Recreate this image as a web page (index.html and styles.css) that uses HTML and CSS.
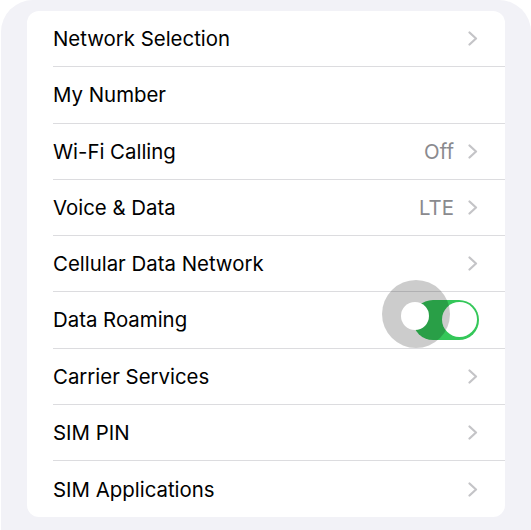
FILE: index.html
```html
<html>
<head>
<title>Cellular</title>
<link rel="stylesheet" href="styles.css">
</head>
<body>
<div class="panel">
  <div class="card">
    <div class="row"><span class="label">Network Selection</span><span class="detail"><svg class="chev" width="10" height="15" viewBox="0 0 10 15"><polyline points="1.5,1.5 8,7.5 1.5,13.5"/></svg></span></div>
    <div class="row"><span class="label">My Number</span></div>
    <div class="row"><span class="label">Wi-Fi Calling</span><span class="detail"><span class="value">Off</span><svg class="chev" width="10" height="15" viewBox="0 0 10 15"><polyline points="1.5,1.5 8,7.5 1.5,13.5"/></svg></span></div>
    <div class="row"><span class="label">Voice &amp; Data</span><span class="detail"><span class="value">LTE</span><svg class="chev" width="10" height="15" viewBox="0 0 10 15"><polyline points="1.5,1.5 8,7.5 1.5,13.5"/></svg></span></div>
    <div class="row"><span class="label">Cellular Data Network</span><span class="detail"><svg class="chev" width="10" height="15" viewBox="0 0 10 15"><polyline points="1.5,1.5 8,7.5 1.5,13.5"/></svg></span></div>
    <div class="row"><span class="label">Data Roaming</span><span class="switch"><span class="knob"></span><span class="touch"><span class="dot"></span></span></span></div>
    <div class="row"><span class="label">Carrier Services</span><span class="detail"><svg class="chev" width="10" height="15" viewBox="0 0 10 15"><polyline points="1.5,1.5 8,7.5 1.5,13.5"/></svg></span></div>
    <div class="row"><span class="label">SIM PIN</span><span class="detail"><svg class="chev" width="10" height="15" viewBox="0 0 10 15"><polyline points="1.5,1.5 8,7.5 1.5,13.5"/></svg></span></div>
    <div class="row"><span class="label">SIM Applications</span><span class="detail"><svg class="chev" width="10" height="15" viewBox="0 0 10 15"><polyline points="1.5,1.5 8,7.5 1.5,13.5"/></svg></span></div>
  </div>
</div>
</body>
</html>
```
FILE: styles.css
```css
body { margin:0; background:#fff; font-family:Inter, "Liberation Sans", sans-serif; color:#000; }
.panel { margin-left:1px; height:530px; box-sizing:border-box; background:#f2f2f7; border-radius:32px 32px 0 0; padding:11px 26px 0 26px; }
.card { background:#fff; border-radius:12px; overflow:hidden; }
.row { display:flex; align-items:center; justify-content:space-between; height:56.25px; box-sizing:border-box; margin-left:26px; padding-right:26px; border-bottom:1px solid #dcdcdf; }
.row:last-child { border-bottom:none; }
.label { font-size:20.4px; }
.detail { display:flex; align-items:center; gap:14px; }
.value { font-size:20.4px; color:#8a8a8e; }
.chev { display:block; margin-right:1px; }
.chev polyline { fill:none; stroke:#c4c4c7; stroke-width:2.2; stroke-linecap:round; stroke-linejoin:round; }
.switch { position:relative; display:flex; justify-content:flex-end; width:66px; height:40px; box-sizing:border-box; padding:2.5px; border-radius:20px; background:#34c759; }
.knob { width:35px; height:35px; border-radius:50%; background:#fff; }
.touch { position:absolute; left:-31px; top:-20px; width:68px; height:68px; border-radius:50%; background:rgba(0,0,0,0.2); display:flex; align-items:center; justify-content:center; }
.dot { width:28px; height:28px; border-radius:50%; background:#fff; margin:4px 3px 0 0; }
```
